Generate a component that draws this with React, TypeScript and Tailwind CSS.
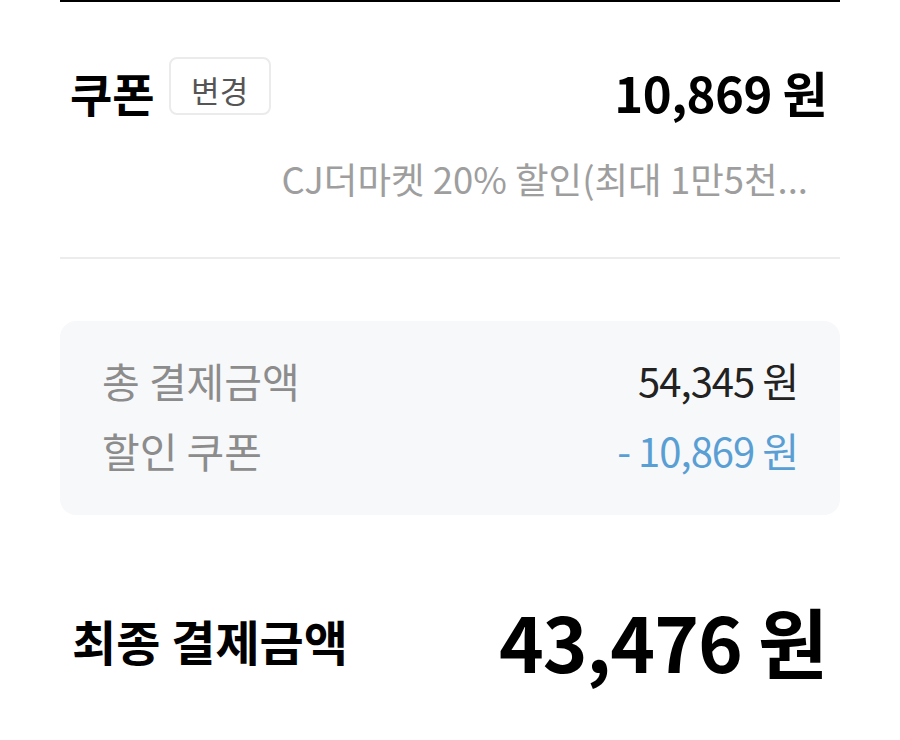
import React from 'react';

const font = "font-['Noto_Sans_CJK_KR','Noto_Sans',sans-serif]";

const SummaryRow = ({ label, value, valueClass }: { label: string; value: string; valueClass: string }) => (
  <div className="flex h-[46px] items-center justify-between">
    <span className="text-[41px] leading-[46px] text-[#8c8c8c]">{label}</span>
    <span className={`text-[40px] leading-[46px] tracking-[-1px] ${valueClass}`}>{value}</span>
  </div>
);

export default function App() {
  return (
    <div className={`h-[740px] w-[900px] overflow-hidden bg-white px-[60px] ${font}`}>
      <div className="border-t-2 border-black">
        {/* coupon */}
        <div className="mt-[55px] flex h-[58px] items-center justify-between pl-[10px] pr-[13px]">
          <div className="flex items-center gap-[14px]">
            <span className="pt-[12px] text-[46px] font-bold leading-[58px] text-black">쿠폰</span>
            <button className="h-[58px] w-[102px] rounded-[8px] border-2 border-[#ebebeb] bg-white pt-[8px] text-[31px] leading-[40px] text-[#555]">
              변경
            </button>
          </div>
          <span className="pt-[12px] text-[49px] font-bold leading-[58px] tracking-[-0.5px] text-black">10,869 원</span>
        </div>
        <p className="mt-[44px] pr-[32px] text-right text-[36.5px] leading-[40px] text-[#9e9e9e]">
          CJ더마켓 20% 할인(최대 1만5천...
        </p>

        <div className="mt-[58px] h-[2px] bg-[#ececec]" />

        {/* summary box */}
        <div className="mt-[62px] flex h-[194px] flex-col gap-[24px] rounded-[16px] bg-[#f7f8fa] px-[42px] pt-[36px]">
          <SummaryRow label="총 결제금액" value="54,345 원" valueClass="text-[#222]" />
          <SummaryRow label="할인 쿠폰" value="- 10,869 원" valueClass="text-[#5a9fd4]" />
        </div>

        {/* final */}
        <div className="mt-[80px] flex h-[90px] items-center justify-between pl-[12px] pr-[13px]">
          <span className="text-[48px] font-bold leading-[90px] text-black">최종 결제금액</span>
          <span className="text-[76px] font-bold leading-[90px] tracking-[-1px] text-black">43,476 원</span>
        </div>
      </div>
    </div>
  );
}
